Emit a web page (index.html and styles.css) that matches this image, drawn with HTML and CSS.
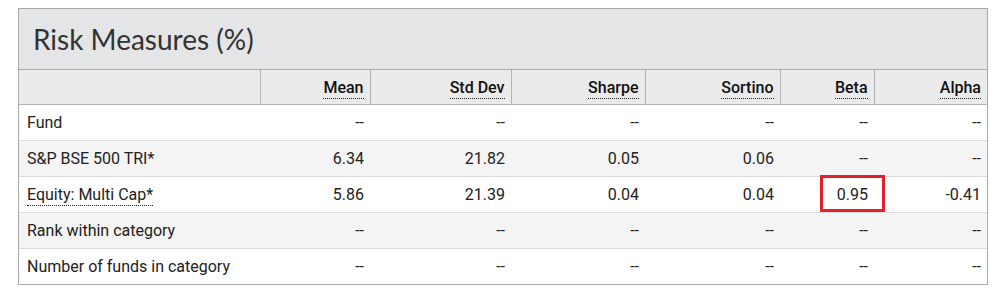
FILE: index.html
```html
<!DOCTYPE html>
<html>
<head>
<meta charset="utf-8">
<link rel="stylesheet" href="styles.css">
</head>
<body>
<div class="panel">
  <div class="title">Risk Measures (%)</div>
  <table class="risk">
    <colgroup>
      <col class="c0"><col class="c1"><col class="c2"><col class="c3"><col class="c4"><col class="c5"><col class="c6">
    </colgroup>
    <thead>
      <tr>
        <th></th>
        <th><span class="tip">Mean</span></th>
        <th><span class="tip">Std Dev</span></th>
        <th><span class="tip">Sharpe</span></th>
        <th><span class="tip">Sortino</span></th>
        <th><span class="tip">Beta</span></th>
        <th><span class="tip">Alpha</span></th>
      </tr>
    </thead>
    <tbody>
      <tr><td>Fund</td><td>--</td><td>--</td><td>--</td><td>--</td><td>--</td><td>--</td></tr>
      <tr class="alt"><td>S&amp;P BSE 500 TRI*</td><td>6.34</td><td>21.82</td><td>0.05</td><td>0.06</td><td>--</td><td>--</td></tr>
      <tr><td><span class="tip">Equity: Multi Cap*</span></td><td>5.86</td><td>21.39</td><td>0.04</td><td>0.04</td><td class="hl">0.95</td><td>-0.41</td></tr>
      <tr class="alt"><td>Rank within category</td><td>--</td><td>--</td><td>--</td><td>--</td><td>--</td><td>--</td></tr>
      <tr><td>Number of funds in category</td><td>--</td><td>--</td><td>--</td><td>--</td><td>--</td><td>--</td></tr>
    </tbody>
  </table>
</div>
</body>
</html>
```
FILE: styles.css
```css
html, body { margin: 0; padding: 0; background: #fff; }
body { padding: 8px 0 0 18px; }
.panel {
  width: 968px;
  border: 1px solid #a9a9a9;
  font-family: Roboto, "Liberation Sans", sans-serif;
  color: #222;
}
.title {
  background: #e4e5e7;
  height: 60px;
  line-height: 60px;
  padding-left: 14px;
  font-family: Lato, "Open Sans", sans-serif;
  font-size: 28px;
  color: #333;
  border-bottom: 1px solid #a9a9a9;
}
.risk { width: 100%; border-collapse: collapse; table-layout: fixed; font-size: 16px; }
.c0 { width: 241px; } .c1 { width: 110px; } .c2 { width: 141px; } .c3 { width: 134px; }
.c4 { width: 135px; } .c5 { width: 94px; } .c6 { width: auto; }
.risk th {
  height: 34px;
  background: #ebebeb;
  border-left: 1px solid #b3b3b3;
  border-bottom: 1px solid #b3b3b3;
  text-align: right;
  padding: 0 6px 0 0;
  font-weight: 500;
  color: #111;
}
.risk th:first-child { border-left: none; }
.tip { border-bottom: 1px dotted #222; padding-bottom: 1px; }
.risk td {
  height: 35px;
  padding: 0 6px 0 0;
  text-align: right;
  border-top: 1px solid #dcdcdc;
  white-space: nowrap;
}
.risk tbody tr:first-child td { border-top: none; }
.risk td:first-child { text-align: left; padding-left: 8px; }
.risk tr.alt td { background: #f4f4f4; }
.risk td.hl { position: relative; }
.risk td.hl::after {
  content: "";
  position: absolute;
  left: 40px; right: -11px; top: -2px; bottom: 0;
  border: 3px solid #e21f2b;
}
```
